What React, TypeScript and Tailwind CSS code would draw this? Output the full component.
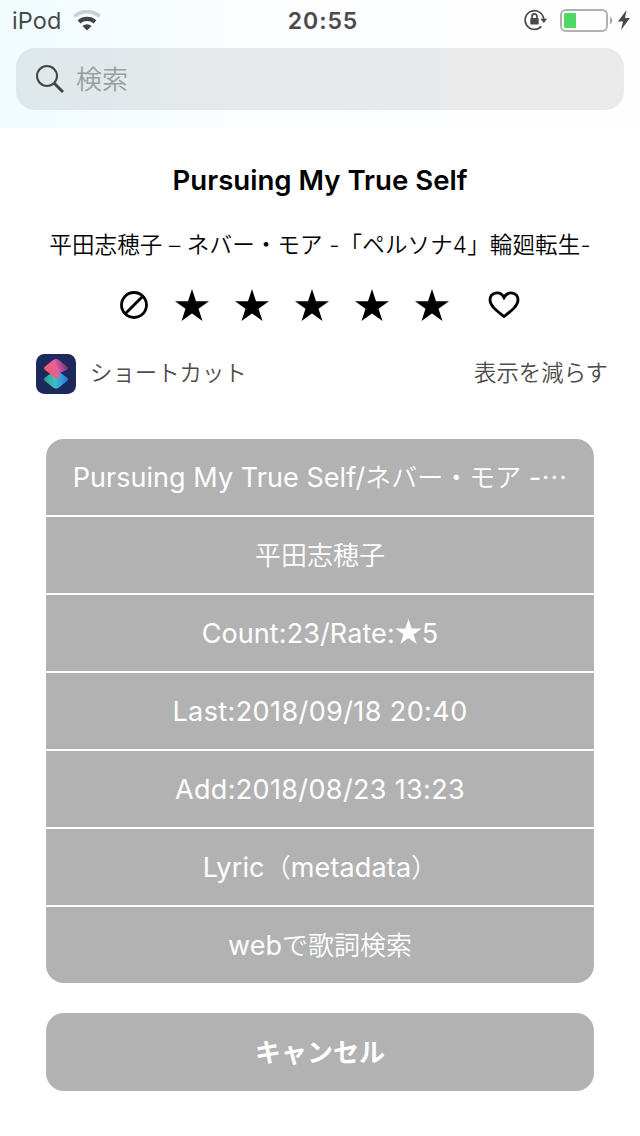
import type { ReactNode } from "react";

type Action = { label: ReactNode; className: string };

const ACTIONS: Action[] = [
  {
    label: (
      <>
        Pursuing My True Self/<Ja>ネバー・モア</Ja> -<Ja>⋯</Ja>
      </>
    ),
    className: "tracking-[0.05px]",
  },
  { label: <Ja>平田志穂子</Ja>, className: "" },
  {
    label: (
      <>
        Count:23/Rate:
        <Star className="inline-block w-[27px] h-[25px] mb-2" />5
      </>
    ),
    className: "tracking-[0.1px]",
  },
  { label: "Last:2018/09/18 20:40", className: "tracking-[0.4px]" },
  { label: "Add:2018/08/23 13:23", className: "tracking-[0.35px]" },
  {
    label: (
      <>
        Lyric<Ja>（</Ja>metadata<Ja>）</Ja>
      </>
    ),
    className: "tracking-[0.15px]",
  },
  {
    label: (
      <>
        web<Ja>で歌詞検索</Ja>
      </>
    ),
    className: "",
  },
];

function Ja({ children }: { children: ReactNode }) {
  return <span className="text-[26px] font-[350] tracking-normal">{children}</span>;
}

function Star({ className }: { className: string }) {
  return (
    <svg viewBox="0 0 34 32" className={className} fill="currentColor">
      <path d="M17 0l4 12.2h13l-10.5 7.5 4 12.3L17 24.4 6.500 32l4-12.300L0 12.200h13z" />
    </svg>
  );
}

function WifiIcon() {
  return (
    <svg viewBox="0 0 28 21" className="w-7 h-[21px]" fill="none">
      <path d="M1.400 6.300a19 19 0 0 1 25.200 0" stroke="#cdd0d2" strokeWidth="3.800" />
      <path d="M6 11.800a12.500 12.500 0 0 1 16 0" stroke="#444446" strokeWidth="4.200" />
      <path d="M14 20.500l-4.600-4.600a7 7 0 0 1 9.200 0z" fill="#444446" />
    </svg>
  );
}

function RotationLockIcon() {
  return (
    <svg viewBox="0 0 24 22" className="w-6 h-[22px]" fill="none" stroke="#4a4a4c">
      <path d="M17.300 17.300A9.300 9.300 0 1 1 19.700 10" strokeWidth="1.700" />
      <path d="M16.400 9.700h6.800l-3.400 4.300z" fill="#4a4a4c" stroke="none" />
      <rect x="6.300" y="9" width="8.400" height="6.500" rx=".8" fill="#4a4a4c" stroke="none" />
      <path d="M8 10V7.400a2.500 2.500 0 0 1 5 0V10" strokeWidth="1.700" />
    </svg>
  );
}

function StatusBar() {
  return (
    <div className="grid grid-cols-3 items-center h-10 text-[#4a4a4c]">
      <div className="flex items-center pl-3">
        <span className="pt-0.5 text-[23.5px] leading-none tracking-[0.1px]">iPod</span>
        <span className="ml-3">
          <WifiIcon />
        </span>
      </div>
      <span className="pt-0.5 text-center font-semibold leading-none text-[23px] tracking-[0.9px] pl-1.5">20:55</span>
      <div className="flex items-center justify-end pr-2.5">
        <RotationLockIcon />
        <svg viewBox="0 0 54 24" className="w-[54px] h-6 ml-3 mt-0.5" fill="none">
          <rect x="1" y="1" width="46" height="21" rx="5" stroke="#b0b0b1" strokeWidth="2" />
          <rect x="4" y="4" width="12" height="15" rx="1" fill="#4cd964" />
          <path d="M50 8c3 1 3 6 0 7z" fill="#a6a6a7" />
        </svg>
        <svg viewBox="0 0 12 20" className="w-3 h-5 ml-1" fill="#4a4a4c">
          <path d="M8.500 0L0 11.500h5L3 20l9-12H7z" />
        </svg>
      </div>
    </div>
  );
}

function ShortcutsLogo() {
  return (
    <svg viewBox="0 0 40 40" className="w-10 h-10">
      <defs>
        <linearGradient id="upper" x1="0" y1="0.700" x2="1" y2="0.400">
          <stop stopColor="#fb5d5c" />
          <stop offset="0.550" stopColor="#e3609f" />
          <stop offset="1" stopColor="#6c2e78" />
        </linearGradient>
        <linearGradient id="lower" x1="0" y1="0.500" x2="1" y2="0.500">
          <stop stopColor="#2b9f86" />
          <stop offset="0.450" stopColor="#3cc0c0" />
          <stop offset="1" stopColor="#2379ef" />
        </linearGradient>
      </defs>
      <rect width="40" height="40" rx="8.500" fill="#1d285d" />
      <path d="M17.500 17.200 8.800 23.700q-1.800 1.500 0 3L17 33.600q3 2.200 6 0L31.200 26.700q1.800-1.500 0-3L22.500 17.200q-2.500-1.800-5 0z" fill="url(#lower)" />
      <path d="M17 6 8.800 12.800q-1.800 1.500 0 3L19.500 24q2.500 1.500 4-.5 1.500-2-.5-3.500l-.5-.5L31.200 15.800q1.800-1.500 0-3L23 6q-3-2.200-6 0z" fill="url(#upper)" />
    </svg>
  );
}

export default function App() {
  return (
    <div className="w-[640px] h-[1136px] overflow-hidden bg-white font-['Inter','Noto_Sans_CJK_JP',sans-serif]">
      <header className="h-32 bg-linear-to-r from-[#f0fcff] via-[#fcfdff] via-40% to-[#fefefe]">
        <StatusBar />
        <div className="flex items-center h-[62px] mx-4 mt-2 pl-5 rounded-[19px] bg-black/8">
          <svg viewBox="0 0 28 28" className="w-7 h-7" fill="none" stroke="#444446">
            <circle cx="11" cy="11" r="10" strokeWidth="2" />
            <path d="M18.200 18.200 27 27" strokeWidth="3" />
          </svg>
          <span className="ml-3 text-[26px] font-[350] text-[#9b9da0]">検索</span>
        </div>
      </header>

      <section className="flex flex-col items-center text-black">
        <h1 className="mt-8 h-10 leading-10 text-[27.6px] font-semibold whitespace-nowrap">Pursuing My True Self</h1>
        <p className="mt-[25px] h-10 leading-10 text-[22.5px] tracking-[0.15px] font-[350] whitespace-nowrap">
          平田志穂子 – ネバー・モア -「ペルソナ4」輪廻転生-
        </p>
        <div className="flex items-center mt-[19px] h-[42px]">
          <svg viewBox="0 0 28 28" className="w-7 h-7" fill="none" stroke="currentColor" strokeWidth="2.800">
            <circle cx="14" cy="14" r="12.500" />
            <path d="M5.500 22.500l17-17" />
          </svg>
          <div className="flex gap-[26px] ml-[27px]">
            {[1, 2, 3, 4, 5].map((n) => (
              <Star key={n} className="w-[34px] h-8" />
            ))}
          </div>
          <svg viewBox="0 0 32 28" className="w-8 h-7 ml-[39px]" fill="none" stroke="currentColor" strokeWidth="2.800">
            <path d="M16 25.500C9 20 2 15 2 9c0-7.500 10-10 14-2.500C20 -1 30 1.500 30 9c0 6-7 11-14 16.500z" />
          </svg>
        </div>
      </section>

      <div className="flex items-center h-10 mt-7 pl-9 pr-8 text-[22.400px] font-[350] text-[#4c4c4c]">
        <ShortcutsLogo />
        <span className="ml-3.5 pb-0.5">ショートカット</span>
        <span className="ml-auto pb-0.5">表示を減らす</span>
      </div>

      <div className="mx-[46px] mt-[45px]">
        <div className="flex flex-col gap-0.5 overflow-hidden rounded-[18px]">
          {ACTIONS.map((action, i) => (
            <button key={i} className="h-19 pt-0.5 bg-[#b2b2b2] text-white whitespace-nowrap text-[27px]">
              <span className={action.className}>{action.label}</span>
            </button>
          ))}
        </div>
        <button className="w-full h-[78px] mt-[30px] rounded-[18px] bg-[#b2b2b2] text-white text-[26px] font-bold">
          キャンセル
        </button>
      </div>
    </div>
  );
}
